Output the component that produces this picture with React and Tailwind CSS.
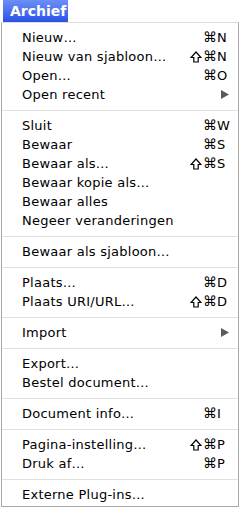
import React from "react";

const groups = [
  [
    { t: "Nieuw…", s: false, k: "N" },
    { t: "Nieuw van sjabloon…", s: true, k: "N" },
    { t: "Open…", s: false, k: "O" },
    { t: "Open recent", sub: true },
  ],
  [
    { t: "Sluit", s: false, k: "W" },
    { t: "Bewaar", s: false, k: "S" },
    { t: "Bewaar als…", s: true, k: "S" },
    { t: "Bewaar kopie als…" },
    { t: "Bewaar alles" },
    { t: "Negeer veranderingen" },
  ],
  [{ t: "Bewaar als sjabloon…" }],
  [
    { t: "Plaats…", s: false, k: "D" },
    { t: "Plaats URI/URL…", s: true, k: "D" },
  ],
  [{ t: "Import", sub: true }],
  [{ t: "Export…" }, { t: "Bestel document…" }],
  [{ t: "Document info…", s: false, k: "I" }],
  [
    { t: "Pagina-instelling…", s: true, k: "P" },
    { t: "Druk af…", s: false, k: "P" },
  ],
  [{ t: "Externe Plug-ins…" }],
];

function Shift() {
  return (
    <svg width="12" height="12" viewBox="0 0 12 12" className="mr-[1px]">
      <polygon
        points="6,1 11,6.5 8.2,6.5 8.2,11 3.8,11 3.8,6.5 1,6.5"
        fill="none"
        stroke="#000"
        strokeWidth="1.2"
        strokeLinejoin="miter"
      />
    </svg>
  );
}

function Row({ item }) {
  return (
    <div className="h-[19px] flex items-center pl-[20px] pr-[7px] leading-[19px]">
      <span className="flex-1 whitespace-nowrap tracking-[0.25px]">{item.t}</span>
      <span className="flex items-center">
        {item.k && (
          <span className="flex items-center whitespace-nowrap">
            {item.s && <Shift />}
            <span className="text-[14px]">⌘</span>
          </span>
        )}
        <span className="w-[14px] flex items-center">
          {item.sub ? (
            <svg width="9" height="9" viewBox="0 0 9 9" className="ml-[4px]">
              <polygon points="0,0 8,4.5 0,9" fill="#5b5b5b" />
            </svg>
          ) : (
            item.k || ""
          )}
        </span>
      </span>
    </div>
  );
}

export default function App() {
  return (
    <div
      className="w-[240px] h-[507px] bg-white text-black text-[13px] overflow-hidden"
      style={{ fontFamily: '"DejaVu Sans", "Lucida Grande", sans-serif' }}
    >
      <div className="h-[22px] flex">
        <div className="ml-[3px] w-[65px] h-[22px] bg-gradient-to-b from-[#6d8ef7] to-[#2b50e6] text-white font-bold text-[14px] leading-[22px] pl-[7px]">
          Archief
        </div>
      </div>
      <div className="ml-[1px] w-[238px] h-[485px] border-x border-b border-[#a9a9a9] border-t border-t-[#dcdcdc] border-t-dotted pt-[5px] pb-[4px]">
        {groups.map((g, gi) => (
          <div key={gi}>
            {gi > 0 && (
              <div className="h-[12px] flex items-center">
                <div className="h-px w-full bg-[#e0e0e0]" />
              </div>
            )}
            {g.map((item, i) => (
              <Row key={i} item={item} />
            ))}
          </div>
        ))}
      </div>
    </div>
  );
}
